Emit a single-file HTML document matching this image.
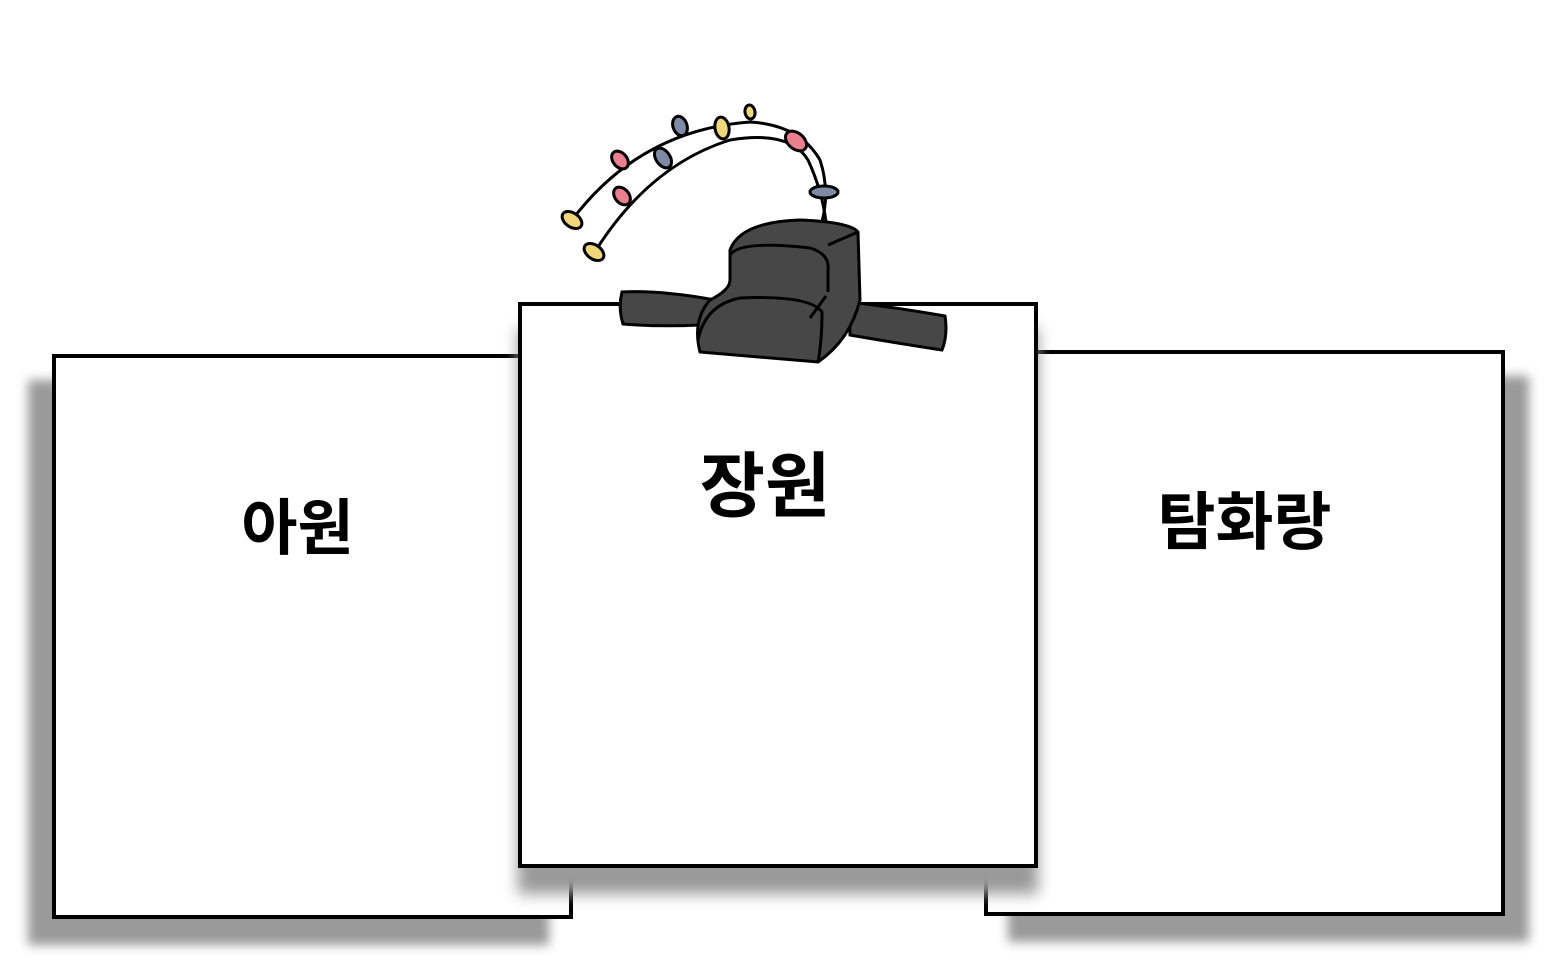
<!DOCTYPE html>
<html><head><meta charset="utf-8"><style>
html,body{margin:0;padding:0;background:#fff;width:1556px;height:973px;overflow:hidden;position:relative;font-family:"Liberation Sans","Noto Sans CJK KR",sans-serif}
.b{position:absolute;background:#fff;border:4px solid #000;box-sizing:border-box;text-align:center;font-weight:bold;color:#000}
.l{left:52px;top:354px;width:521px;height:565px;box-shadow:-24px 26px 10px #9a9a9a}
.r{left:984px;top:350px;width:521px;height:566px;box-shadow:24px 26px 10px #9a9a9a}
.c{left:518px;top:302px;width:520px;height:566px;box-shadow:0 26px 14px #9a9a9a;z-index:2}
.t{position:absolute;left:0;right:0;line-height:1;white-space:nowrap}
</style></head><body>
<div class="b l"><div class="t" style="top:140px;font-size:61px;right:30px">아원</div></div>
<div class="b r"><div class="t" style="top:138px;font-size:63px">탐화랑</div></div>
<div class="b c"><div class="t" style="top:146px;font-size:71px;right:26px">장원</div></div>
<svg style="position:absolute;left:0;top:0;z-index:3" width="1556" height="973" viewBox="0 0 1556 973">
<g fill="none" stroke="#000" stroke-width="3">
<path d="M572 220 Q640 130 750 122 Q800 125 820 160 Q830 190 822 222"/>
<path d="M596 250 Q650 165 730 140 Q790 130 808 160 Q822 190 826 222"/>
</g>
<g stroke="#000" stroke-width="3">
<ellipse cx="572" cy="220" rx="11" ry="7" fill="#f0d77a" transform="rotate(35 572 220)"/>
<ellipse cx="594" cy="252" rx="11" ry="7" fill="#f0d77a" transform="rotate(35 594 252)"/>
<ellipse cx="620" cy="160" rx="10" ry="7" fill="#ea7f90" transform="rotate(50 620 160)"/>
<ellipse cx="622" cy="196" rx="10" ry="7" fill="#ea7f90" transform="rotate(50 622 196)"/>
<ellipse cx="680" cy="126" rx="10" ry="7" fill="#7f8aa4" transform="rotate(70 680 126)"/>
<ellipse cx="663" cy="158" rx="11" ry="7" fill="#7f8aa4" transform="rotate(55 663 158)"/>
<ellipse cx="722" cy="128" rx="11" ry="7" fill="#f0d77a" transform="rotate(80 722 128)"/>
<ellipse cx="750" cy="112" rx="7" ry="5" fill="#f0d77a" transform="rotate(80 750 112)"/>
<ellipse cx="796" cy="141" rx="12" ry="8" fill="#ea7f90" transform="rotate(40 796 141)"/>
<ellipse cx="824" cy="192" rx="14" ry="6" fill="#7f8aa4"/>
<path d="M622 292 Q660 290 715 300 L700 325 Q660 327 623 324 Q618 308 622 292Z" fill="#474747"/>
<path d="M850 302 Q900 308 945 316 Q948 335 942 350 Q890 342 850 335Z" fill="#474747"/>
<path d="M730 250 Q740 222 800 220 Q850 222 858 232 L860 300 Q850 340 818 362 L700 352 Q692 320 710 300 Q730 290 730 280Z" fill="#474747"/>
<path d="M730 255 Q740 240 810 248 Q830 254 828 270 L828 292" fill="none"/>
<path d="M698 340 Q705 305 740 298 Q810 295 822 312 Q822 340 818 362" fill="none"/>
<path d="M828 245 L858 232" fill="none"/>
<path d="M810 318 L826 296" fill="none"/>
</g>
</svg>
</body></html>
